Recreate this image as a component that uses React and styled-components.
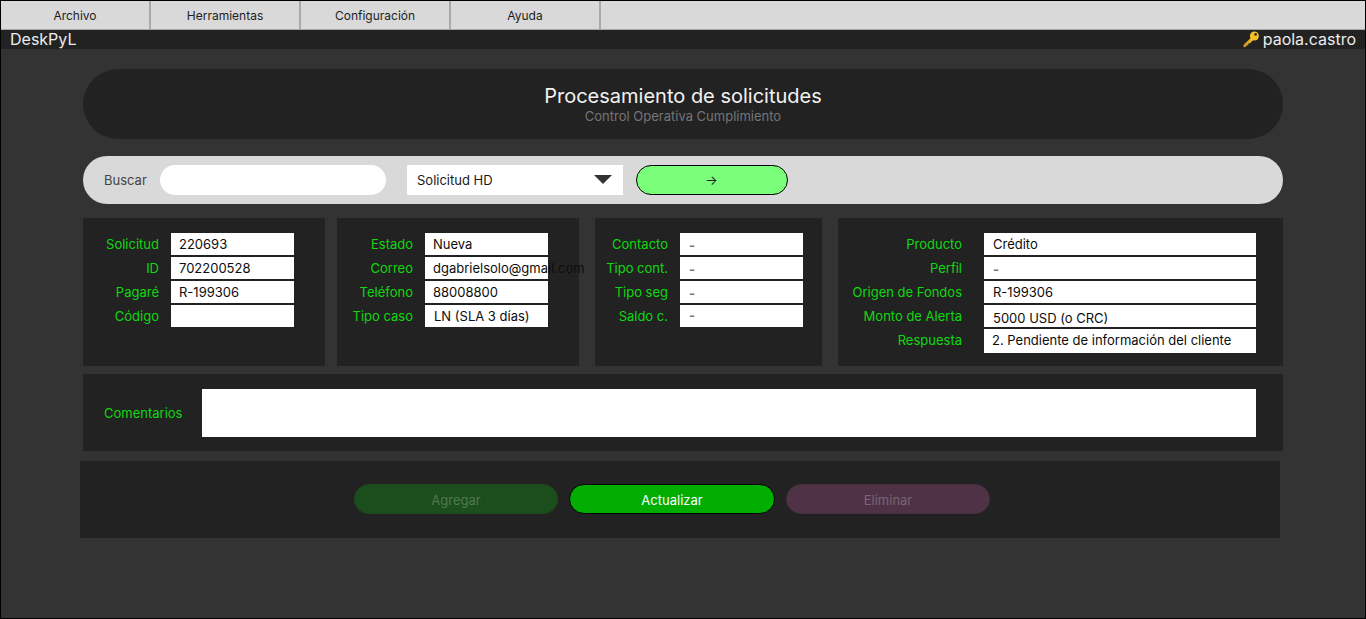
import React from "react";
import styled, { createGlobalStyle } from "styled-components";

const Global = createGlobalStyle`
  html, body { margin: 0; padding: 0; background: #333; }
  * { box-sizing: border-box; }
  body { font-family: Inter, "Liberation Sans", sans-serif; }
`;

const Frame = styled.div`
  width: 1366px;
  height: 619px;
  background: #333333;
  border: 1px solid #000;
  display: flex;
  flex-direction: column;
  overflow: hidden;
`;

const MenuBar = styled.nav`
  height: 29px;
  background: #d9d9d9;
  display: flex;
  flex: none;
  border-bottom: 1px solid #a6a6a6;
`;

const MenuItem = styled.div`
  width: 150px;
  height: 100%;
  border-right: 2px solid #aaaaaa;
  display: flex;
  align-items: center;
  justify-content: center;
  font-size: 12px;
  color: #1e1e1e;
`;

const TitleBar = styled.header`
  height: 19px;
  flex: none;
  background: #222222;
  display: flex;
  justify-content: space-between;
  align-items: center;
  padding: 0 9px;
  color: #ececec;
  font-size: 16px;
  line-height: 19px;
`;

const UserBox = styled.div`
  display: flex;
  align-items: center;
  gap: 4px;
`;

const Main = styled.main`
  flex: 1;
  display: flex;
  flex-direction: column;
  padding: 20px 82px 0;
`;

const Hero = styled.section`
  height: 70px;
  background: #222222;
  border-radius: 35px;
  display: flex;
  flex-direction: column;
  align-items: center;
  justify-content: center;
  flex: none;
`;

const HeroTitle = styled.h1`
  margin: 0;
  font-size: 20px;
  line-height: 24px;
  font-weight: 400;
  color: #f2f2f2;
`;

const HeroSub = styled.p`
  margin: 0;
  font-size: 13px;
  line-height: 16px;
  color: #757575;
`;

const SearchBar = styled.section`
  margin-top: 17px;
  height: 48px;
  background: #d9d9d9;
  border-radius: 24px;
  display: flex;
  align-items: center;
  padding-left: 21px;
  flex: none;
`;

const SearchLabel = styled.span`
  width: 56px;
  font-size: 13px;
  color: #444444;
`;

const SearchInput = styled.div`
  width: 226px;
  height: 30px;
  border-radius: 15px;
  background: #fff;
`;

const Select = styled.div`
  margin-left: 21px;
  width: 216px;
  height: 30px;
  background: #fff;
  display: flex;
  align-items: center;
  justify-content: space-between;
  padding: 0 11px 0 10px;
  font-size: 13px;
  color: #1a1a1a;
`;

const Caret = styled.span`
  width: 0;
  height: 0;
  border-left: 9px solid transparent;
  border-right: 9px solid transparent;
  border-top: 9px solid #333;
  margin-top: -2px;
`;

const GoButton = styled.div`
  margin-left: 13px;
  width: 152px;
  height: 30px;
  border-radius: 15px;
  background: #7bff7b;
  border: 1px solid #000;
  display: flex;
  align-items: center;
  justify-content: center;
  color: #1e1e1e;
  font-size: 13px;
  line-height: 26px;
  padding-right: 1px;
`;

const Panels = styled.section`
  margin-top: 14px;
  display: flex;
  flex: none;
`;

const Panel = styled.div`
  width: ${(p) => p.$width}px;
  margin-left: ${(p) => p.$offset || 0}px;
  height: 148px;
  background: #222222;
  padding-top: 15px;
  display: grid;
  grid-template-columns: ${(p) => p.$label}px ${(p) => p.$value}px;
  column-gap: ${(p) => p.$gap}px;
  grid-auto-rows: 22px;
  row-gap: 2px;
  align-content: start;
`;

const FieldLabel = styled.span`
  font-size: 13px;
  line-height: 23px;
  color: #0fd80f;
  text-align: right;
  white-space: nowrap;
  justify-self: end;
`;

const FieldValue = styled.div`
  background: #fff;
  font-size: 13px;
  line-height: ${(p) => p.$line || 23}px;
  height: ${(p) => p.$height || 22}px;
  color: ${(p) => (p.$muted ? "#777777" : "#0d0d0d")};
  font-weight: ${(p) => (p.$muted ? 700 : 400)};
  padding-left: ${(p) => p.$pad || 8}px;
  white-space: nowrap;
`;

const Comments = styled.section`
  margin-top: 8px;
  height: 77px;
  background: #222222;
  display: flex;
  align-items: center;
  padding-left: 21px;
  flex: none;
`;

const CommentLabel = styled.span`
  width: 98px;
  font-size: 13px;
  color: #0fd80f;
`;

const CommentBox = styled.div`
  width: 1054px;
  height: 48px;
  background: #fff;
`;

const Actions = styled.section`
  margin: 10px 0 0 -3px;
  height: 77px;
  width: 1200px;
  background: #222222;
  display: flex;
  align-items: flex-start;
  gap: 12px;
  padding: 23px 0 0 274px;
  flex: none;
`;

const ActionButton = styled.div`
  width: ${(p) => p.$width || 204}px;
  margin: 0 ${(p) => p.$trim || 0}px;
  height: 30px;
  border-radius: 15px;
  background: ${(p) => p.$bg};
  border: 1px solid ${(p) => p.$border};
  color: ${(p) => p.$color};
  font-size: 13px;
  padding-top: 1px;
  display: flex;
  align-items: center;
  justify-content: center;
`;

const KeyIcon = () => (
  <svg width="16" height="17" viewBox="0 0 16 17" aria-hidden="true">
    <defs>
      <linearGradient id="keyGrad" x1="0" y1="1" x2="1" y2="0">
        <stop offset="0" stopColor="#c98f14" />
        <stop offset="1" stopColor="#f6c72f" />
      </linearGradient>
    </defs>
    <path d="M8.2 6.6.4 14l.2 2.2 2.2-.3.8-1.5 1.6-.3.3-1.5 1.6-.4 3.9-3.9z" fill="url(#keyGrad)" />
    <circle cx="11.4" cy="5" r="4.5" fill="#f3c02c" />
    <circle cx="12.6" cy="3.4" r="1.4" fill="#3a2c10" />
  </svg>
);

const panels = [
  {
    width: 242, label: 76, value: 123, gap: 12,
    rows: [["Solicitud", "220693"], ["ID", "702200528"], ["Pagaré", "R-199306"], ["Código", ""]],
  },
  {
    width: 242, offset: 12, label: 76, value: 123, gap: 12,
    rows: [["Estado", "Nueva"], ["Correo", "dgabrielsolo@gmail.com"], ["Teléfono", "88008800"], ["Tipo caso", "LN (SLA 3 días)", { pad: 9 }]],
  },
  {
    width: 227, offset: 16, label: 73, value: 123, gap: 12,
    rows: [
      ["Contacto", "-", { pad: 9, muted: true, line: 24 }],
      ["Tipo cont.", "-", { pad: 9, muted: true, line: 24 }],
      ["Tipo seg", "-", { pad: 9, muted: true, line: 25 }],
      ["Saldo c.", "-", { pad: 9, muted: true, line: 20 }],
    ],
  },
  {
    width: 445, offset: 16, label: 124, value: 272, gap: 22,
    rows: [
      ["Producto", "Crédito", { pad: 9 }],
      ["Perfil", "-", { pad: 9, muted: true, line: 24 }],
      ["Origen de Fondos", "R-199306", { pad: 9 }],
      ["Monto de Alerta", "5000 USD (o CRC)", { pad: 9, line: 27 }],
      ["Respuesta", "2. Pendiente de información del cliente", { pad: 8, height: 24 }],
    ],
  },
];

export default function App() {
  return (
    <Frame>
      <Global />
      <MenuBar>
        {["Archivo", "Herramientas", "Configuración", "Ayuda"].map((m) => (
          <MenuItem key={m}>{m}</MenuItem>
        ))}
      </MenuBar>
      <TitleBar>
        <span>DeskPyL</span>
        <UserBox>
          <KeyIcon />
          <span>paola.castro</span>
        </UserBox>
      </TitleBar>
      <Main>
        <Hero>
          <HeroTitle>Procesamiento de solicitudes</HeroTitle>
          <HeroSub>Control Operativa Cumplimiento</HeroSub>
        </Hero>
        <SearchBar>
          <SearchLabel>Buscar</SearchLabel>
          <SearchInput />
          <Select>
            <span>Solicitud HD</span>
            <Caret />
          </Select>
          <GoButton>→</GoButton>
        </SearchBar>
        <Panels>
          {panels.map((p, i) => (
            <Panel key={i} $width={p.width} $offset={p.offset} $label={p.label} $value={p.value} $gap={p.gap}>
              {p.rows.map(([label, value, o = {}]) => (
                <React.Fragment key={label}>
                  <FieldLabel>{label}</FieldLabel>
                  <FieldValue $pad={o.pad} $line={o.line} $height={o.height} $muted={o.muted}>{value}</FieldValue>
                </React.Fragment>
              ))}
            </Panel>
          ))}
        </Panels>
        <Comments>
          <CommentLabel>Comentarios</CommentLabel>
          <CommentBox />
        </Comments>
        <Actions>
          <ActionButton $bg="#1c4d1c" $border="#1f4a1f" $color="#4f7a4f">Agregar</ActionButton>
          <ActionButton $width={206} $trim={-1} $bg="#00ad00" $border="#000" $color="#fff">Actualizar</ActionButton>
          <ActionButton $bg="#4f3245" $border="#463040" $color="#7a6574">Eliminar</ActionButton>
        </Actions>
      </Main>
    </Frame>
  );
}
